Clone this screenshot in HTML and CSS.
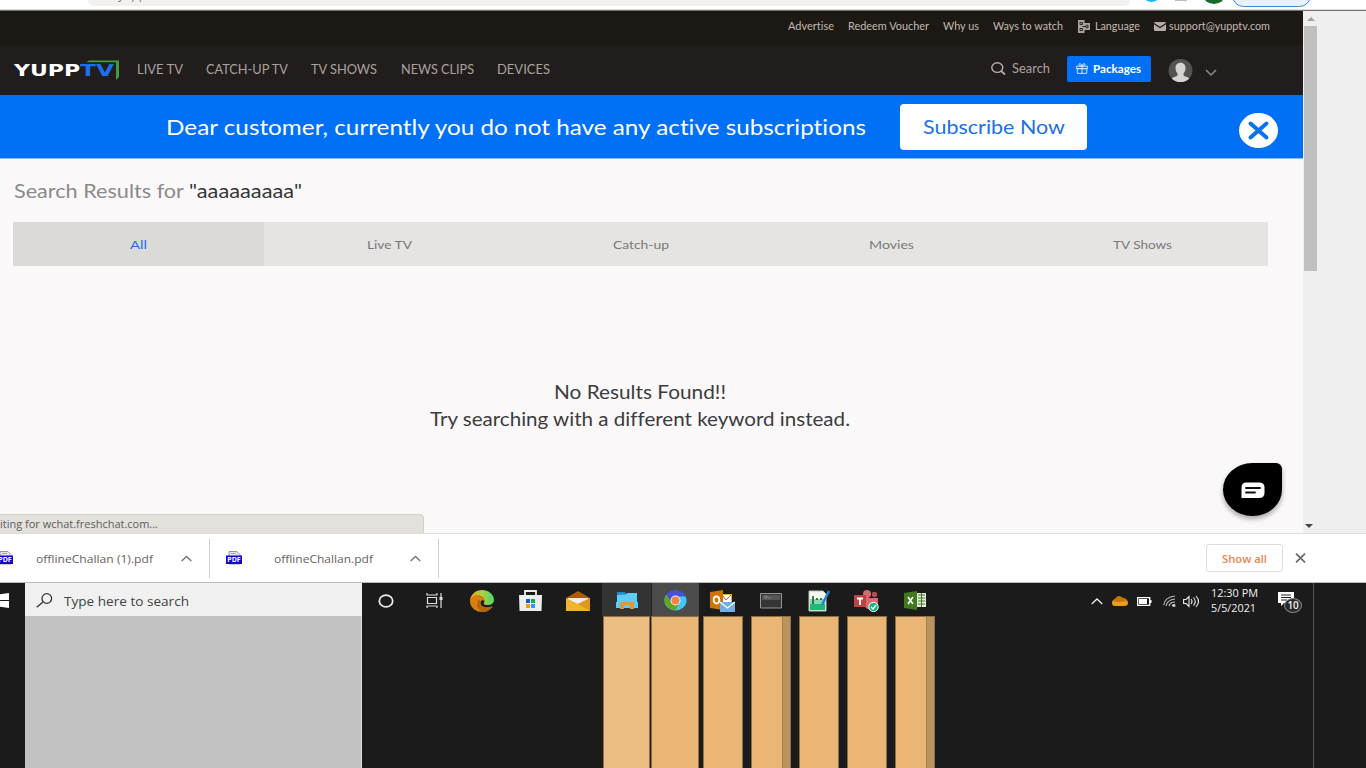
FILE: index.html
```html
<!DOCTYPE html>
<html lang="en">
<head>
<meta charset="utf-8">
<title>YuppTV - Search Results</title>
<link rel="stylesheet" href="styles.css">
</head>
<body>
<div class="chrome">
  <div class="omnibox"><span>yupp</span></div>
  <i class="ext cyan"></i><i class="ext grey"></i><i class="ext green"></i><i class="update"></i>
</div>

<div class="window">
  <div class="page">
    <div class="topbar">
      <span class="fit" data-w="46">Advertise</span>
      <span class="fit" data-w="81">Redeem Voucher</span>
      <span class="fit" data-w="36">Why us</span>
      <span class="fit" data-w="70">Ways to watch</span>
      <span class="pair language">
        <svg width="13" height="13" viewBox="0 0 13 13"><path d="M0 0h6.500v3H12v7H6.500v3H0z" fill="#a9a19d"/><path d="M2 2.500h2.500v2H2zM2 8.500h2.500v2H2zM8 5.300h2v2.400H8zM4.500 6.500H8" fill="none" stroke="#312b28"/></svg>
        <span class="fit" data-w="45">Language</span>
      </span>
      <span class="pair mail">
        <svg width="12" height="9" viewBox="0 0 12 9"><rect width="12" height="9" rx="1" fill="#b5aca8"/><path d="M0 1.500l6 4 6-4" fill="none" stroke="#1c1814" stroke-width="1.200"/></svg>
        <span class="fit" data-w="101">support@yupptv.com</span>
      </span>
    </div>

    <div class="nav">
      <div class="logo">
        <span class="fit" data-w="66">YUPP</span><span class="fit tv" data-w="34">TV</span>
        <svg class="corner" width="34" height="21" viewBox="0 0 34 21"><path d="M0 2.200L3 .5H33V17L30 20V2.200z" fill="#3f9d3c"/></svg>
      </div>
      <div class="menu">
        <span class="fit" data-w="46">LIVE TV</span>
        <span class="fit" data-w="82">CATCH-UP TV</span>
        <span class="fit" data-w="66">TV SHOWS</span>
        <span class="fit" data-w="73">NEWS CLIPS</span>
        <span class="fit" data-w="53">DEVICES</span>
      </div>
      <div class="find">
        <svg width="15" height="13" viewBox="0 0 15 13"><ellipse cx="6.300" cy="5.600" rx="5.500" ry="4.800" fill="none" stroke="#b5afad" stroke-width="1.400"/><path d="M10 9l4 3.500" stroke="#b5afad" stroke-width="1.700"/></svg>
        <span class="fit" data-w="38">Search</span>
      </div>
      <div class="packages">
        <svg width="12" height="11" viewBox="0 0 12 12" preserveAspectRatio="none" fill="none" stroke="#d7e8ff"><path d="M.6 3.500h10.800v2.700H.6zM1.300 6.200h9.400v5.100H1.300zM6 3.500v7.800M6 3.500C4 3.500 2.500 2.500 3 1.200S5.600 1 6 3.500C6.400 1 8.500-.1 9 1.200S8 3.500 6 3.500"/></svg>
        <span class="fit" data-w="48">Packages</span>
      </div>
      <svg class="avatar" width="25" height="23" viewBox="0 0 25 23"><defs><clipPath id="face"><ellipse cx="12.500" cy="11.500" rx="12" ry="11.500"/></clipPath></defs><g clip-path="url(#face)"><path fill="#555250" d="M0 0h25v23H0z"/><path d="M7.500 8.500C7.500 2 17.500 2 17.500 8.500c0 3-.7 4.500-2 6v2c2 1.500 5 1.500 6 3.500v4H3.500v-4c1-2 4-2 6-3.500v-2c-1.300-1.500-2-3-2-6z" fill="#d5d4d3"/></g></svg>
      <svg class="more" width="12" height="8" viewBox="0 0 12 8"><path d="M1 1l5 5 5-5" fill="none" stroke="#8f8b89" stroke-width="1.500"/></svg>
    </div>

    <div class="banner">
      <span class="fit message" data-w="700">Dear customer, currently you do not have any active subscriptions</span>
      <div class="subscribe"><span class="fit" data-w="142">Subscribe Now</span></div>
      <svg class="dismiss" width="39" height="35" viewBox="0 0 39 35"><ellipse cx="19.500" cy="17.500" rx="19.500" ry="17.500" fill="#fff"/><path d="M11.500 10.500l16 14M27.500 10.500l-16 14" stroke="#0b72ef" stroke-width="4" stroke-linecap="round"/></svg>
    </div>

    <div class="heading"><span class="fit" data-w="170">Search Results for</span><span class="fit term" data-w="113">"aaaaaaaaa"</span></div>

    <div class="tabs">
      <div class="active"><span class="fit" data-w="17">All</span></div>
      <div><span class="fit" data-w="45">Live TV</span></div>
      <div><span class="fit" data-w="56">Catch-up</span></div>
      <div><span class="fit" data-w="45">Movies</span></div>
      <div><span class="fit" data-w="59">TV Shows</span></div>
    </div>

    <div class="empty">
      <span class="fit" data-w="172">No Results Found!!</span>
      <span class="fit" data-w="420">Try searching with a different keyword instead.</span>
    </div>

    <div class="chat"><svg width="24" height="17" viewBox="0 0 24 17"><path d="M5 .5h13q5.500 0 5.500 5v5.500q0 5-5.500 5H.5V6q0-5.500 4.500-5.500z" fill="#fff"/><path d="M5 6h14M5 10.500h9" stroke="#111" stroke-width="1.800" stroke-linecap="round"/></svg></div>
    <div class="status"><span class="fit" data-w="158">iting for wchat.freshchat.com...</span></div>
  </div>
  <div class="scroll">
    <svg width="8" height="4" viewBox="0 0 8 4"><path d="M0 4l4-4 4 4z" fill="#a0a0a0"/></svg>
    <i class="thumb"></i>
    <svg class="down" width="8" height="4" viewBox="0 0 8 4"><path d="M0 0h8L4 4z" fill="#444"/></svg>
  </div>
</div>

<div class="downloads">
  <div class="file first">
    <svg width="17" height="14" viewBox="0 0 17 14"><path d="M3 .5h8l3 3V13H3z" fill="#e3e3e3" stroke="#999"/><path d="M5 2.500h5" stroke="#aaa"/><path fill="#1407cd" d="M0 4.500h16v8.500H0z"/><text class="pdf" x="1.300" y="11.300" textLength="13.400" lengthAdjust="spacingAndGlyphs">PDF</text></svg>
    <span class="fit" data-w="117">offlineChallan (1).pdf</span>
    <svg class="up" width="11" height="7" viewBox="0 0 11 7"><path d="M.7 6l4.800-4.500L10.300 6" fill="none" stroke="#777" stroke-width="1.500"/></svg>
  </div>
  <div class="file second">
    <svg width="17" height="14" viewBox="0 0 17 14"><path d="M3 .5h8l3 3V13H3z" fill="#e3e3e3" stroke="#999"/><path d="M5 2.500h5" stroke="#aaa"/><path fill="#1407cd" d="M0 4.500h16v8.500H0z"/><text class="pdf" x="1.300" y="11.300" textLength="13.400" lengthAdjust="spacingAndGlyphs">PDF</text></svg>
    <span class="fit" data-w="99">offlineChallan.pdf</span>
    <svg class="up" width="11" height="7" viewBox="0 0 11 7"><path d="M.7 6l4.800-4.500L10.300 6" fill="none" stroke="#777" stroke-width="1.500"/></svg>
  </div>
  <div class="showall"><span class="fit" data-w="45">Show all</span></div>
  <svg width="11" height="10" viewBox="0 0 11 10"><path d="M1 .7l9 8.600M10 .7L1 9.300" stroke="#686868" stroke-width="1.700"/></svg>
</div>

<div class="taskbar">
  <div class="start"><svg width="9" height="15" viewBox="0 0 9 15"><path d="M0 1.200L9 0v7H0zM0 8h9v7L0 13.800z" fill="#fff"/></svg></div>
  <div class="search">
    <svg width="17" height="15" viewBox="0 0 17 15"><circle cx="10.800" cy="5.500" r="4.800" fill="none" stroke="#333" stroke-width="1.300"/><path d="M7 9L.7 14.300" stroke="#333" stroke-width="1.400"/></svg>
    <span class="fit" data-w="125">Type here to search</span>
  </div>
  <div class="apps">
    <div><svg width="16" height="14" viewBox="0 0 16 14"><ellipse cx="8" cy="7" rx="6.700" ry="5.900" fill="none" stroke="#e8e8e8" stroke-width="1.800"/></svg></div>
    <div><svg width="17" height="15" viewBox="0 0 17 15" fill="none" stroke="#ddd" stroke-width="1.200"><path d="M1 0v2h10V0M1 15v-2h10v2M1.500 4.500h9v6h-9zM15 0v15"/><path d="M13.500 5.500h3" stroke-width="3"/></svg></div>
    <div><svg width="24" height="22" viewBox="0 0 24 22"><defs><linearGradient id="edge"><stop offset="0" stop-color="#e9a528"/><stop offset=".5" stop-color="#b3cc43"/><stop offset="1" stop-color="#48db63"/></linearGradient></defs><path d="M0 10C1 4 6 0 12 0s12 4 12 10c0 4-4 5.500-8 5-3-.3-2.500-1.500-1.500-3C15 7 9 4 4 7 2 8 1 9 0 10z" fill="url(#edge)"/><path d="M0 11c0-5 7-8 12-4 2 1.500 3 3 2.500 5-1-3-4-2-4 1 0 4 7 6 12 3-2 4-6 6-10 6C5 22 0 17 0 11z" fill="#d98011"/><path d="M8.500 9.500c-3 5-1 11 4 12.500 4 0 8-2 10-6-5 3-12 1-12-3 0-2 0-3-2-3.500z" fill="#b5640a"/></svg></div>
    <div><svg width="23" height="21" viewBox="0 0 23 21"><path d="M6 6V1h11v5" fill="none" stroke="#eee" stroke-width="1.800"/><path fill="#eee" d="M0 5h23l-.5 16H.5z"/><path fill="#1557d4" d="M7 9h4v4H7z"/><path fill="#13ae52" d="M12 9h4v4h-4z"/><path fill="#f19b18" d="M7 14h4v4H7z"/><path fill="#17a5ed" d="M12 14h4v4h-4z"/></svg></div>
    <div><svg width="24" height="20" viewBox="0 0 24 20"><path d="M0 7L12 0l12 7v5H0z" fill="#ad5b08"/><path d="M2 7h20v6H2z" fill="#eee"/><path d="M0 7l12 6 12-6v13H0z" fill="#edb52b"/><path d="M24 7v13L12 13z" fill="#dc9a1c"/></svg></div>
    <div class="hover"><svg width="22" height="17" viewBox="0 0 22 17"><path d="M1 0h8l1 2h11v14H1z" fill="#1b8dc7"/><path d="M1 3l9-.5L11 1h10v9h1v6H0v-6h1z" fill="#5dcdf8"/><path d="M4 10h14v7h-4v-4H8v4H4z" fill="#d59a42"/></svg></div>
    <div class="current"><svg width="23" height="21" viewBox="0 0 23 21"><ellipse cx="11.500" cy="10.500" rx="11" ry="10" fill="#3fc8fb"/><path d="M2 4.500Q6 0 12 .5q7 0 10 6H11l-4 6z" fill="#4552d5"/><path d="M2 4.500q-3 5 0 10 3 5 9 6l4-6q-6 1-8-3z" fill="#66a61e"/><circle cx="11.500" cy="10.500" r="5" fill="#e8eaf4"/><circle cx="11.500" cy="10.500" r="4" fill="#f58243"/></svg></div>
    <div><svg width="25" height="22" viewBox="0 0 25 22"><path fill="#f0a83d" d="M12 4h10v10H12z"/><path d="M13 5h8v7h-8z" fill="#fff"/><path d="M13 6l3 4 5-5" fill="none" stroke="#c66c04"/><path d="M0 2l13-2v20L0 18z" fill="#cf7303"/><ellipse cx="6.500" cy="10" rx="2.800" ry="3.500" fill="none" stroke="#fff" stroke-width="1.800"/><path fill="#70b0e9" d="M10 12h15v10H10z"/><path d="M10 12l7.500 6 7.500-6" fill="none" stroke="#fff" stroke-width="1.300"/></svg></div>
    <div><svg width="22" height="16" viewBox="0 0 22 16"><path fill="#373435" stroke="#969696" d="M.5.500h21v14.500H.5z"/><path fill="#555" d="M2 2h18v5H2z"/><path d="M4 3h3v2H4M8 5h3" fill="none" stroke="#999" stroke-width=".7"/></svg></div>
    <div><svg width="22" height="22" viewBox="0 0 22 22"><path fill="#f5f5ef" stroke="#b2c9b8" d="M1 1h14l3 3v17H1z"/><path fill="#22b878" d="M2 13h15v7H2z"/><path fill="#7fdcae" d="M2 9h15v5H2z"/><path d="M5 6v8M8 9h2M12 9h2" stroke="#244633" stroke-width="1.500"/><path d="M14 15l7-14" stroke="#2683cf" stroke-width="2.500"/></svg></div>
    <div><svg width="25" height="22" viewBox="0 0 25 22"><circle cx="13" cy="4" r="4" fill="#d96970"/><circle cx="20.500" cy="4.500" r="2.700" fill="#b74e53"/><path d="M9 8h15v6q0 6-6 6-7 0-9-7z" fill="#de6970"/><path fill="#ba4346" d="M0 5h12v12H0z"/><path d="M3 8.500h6M6 8.500V15" stroke="#fff" stroke-width="1.800"/><circle cx="19.500" cy="17" r="4.700" fill="#14b782" stroke="#fff"/><path d="M17 17l2 2 3-4" fill="none" stroke="#fff" stroke-width="1.300"/></svg></div>
    <div><svg width="22" height="19" viewBox="0 0 22 19"><path fill="#e3efdb" d="M11 2h11v14H11z"/><path d="M14 4h7M14 7h7M14 10h7M14 13h7M17.500 2v14" stroke="#47732f"/><path d="M0 2l13-2v19L0 17z" fill="#43781f"/><path d="M4 6l5 7M9 6l-5 7" stroke="#fff" stroke-width="1.600"/></svg></div>
  </div>
  <div class="tray">
    <svg class="t1" width="12" height="7" viewBox="0 0 12 7"><path d="M.7 6l5.300-5 5.300 5" fill="none" stroke="#eee" stroke-width="1.300"/></svg>
    <svg class="t2" width="16" height="10" viewBox="0 0 16 10"><path d="M0 7q0-3 3-4 3-5 8-1 5 1 5 5 0 3-4 3H3Q0 10 0 7z" fill="#ed9d1b"/><path d="M3 3q3-5 8-1 4 1 4 3L7 6 1 5q0-1 2-2z" fill="#c87309"/></svg>
    <svg class="t3" width="15" height="9" viewBox="0 0 15 9"><path d="M.7.700h12v7.600h-12z" fill="none" stroke="#fff" stroke-width="1.300"/><path d="M2 2h8v5H2zM13 3h1.500v3H13z" fill="#fff"/></svg>
    <svg class="t4" width="13" height="12" viewBox="0 0 13 12" fill="none" stroke="#bbb" stroke-width="1.200"><path d="M.7 10Q2 2 12 1M3 11Q4 5 12 4M6 11q1-4 6-4M9 11q1-2 3-1.500"/><circle cx="11" cy="10.500" r="1" fill="#fff"/></svg>
    <svg class="t5" width="17" height="13" viewBox="0 0 17 13" fill="none" stroke="#eee" stroke-width="1.100"><path d="M.6 4.500H3L6 1.500v10l-3-3H.6zM8 4q2 2.500 0 5M10.500 2.500q3.500 4 0 8M13 1q5 5.500 0 11"/></svg>
    <div class="clock"><span class="fit" data-w="47">12:30 PM</span><span class="fit" data-w="45">5/5/2021</span></div>
    <div class="notice"><svg width="16" height="15" viewBox="0 0 16 15"><path d="M0 0h16v11H6l-3 3v-3H0z" fill="#fff"/><path d="M3 3h10M3 5.500h10M3 8h6" stroke="#222"/></svg><b>10</b></div>
  </div>
</div>

<div class="lower">
  <div class="block"></div>
  <div class="bars"><i class="light"></i><i class="warm"></i><i></i><i class="split"></i><i></i><i></i><i class="split"></i></div>
  <div class="edge-line"></div>
</div>
<script src="fit.js"></script>
</body>
</html>
```

FILE: styles.css
```css
* { box-sizing: border-box; }
body { margin: 0; width: 1366px; height: 768px; overflow: hidden; background: #1b1b1b; font-family: Lato, sans-serif; font-variant-ligatures: none; }
svg { display: block; flex: none; }
.fit { display: block; flex: none; white-space: nowrap; }
.fit > span { display: inline-block; transform-origin: 0 50%; }

/* browser toolbar */
.chrome { position: relative; height: 11px; background: #fff; border-bottom: 1px solid #77746f; box-shadow: inset 0 -1px #dcdcdc; overflow: hidden; }
.omnibox { width: 1042px; height: 6px; margin-left: 88px; background: #f2f1ef; border-radius: 0 0 12px 12px; overflow: hidden; }
.omnibox span { display: block; margin: -13px 0 0 30px; font: 12px/16px "Open Sans", sans-serif; color: #777; }
.ext { position: absolute; border-radius: 50%; }
.cyan { left: 1144px; top: -10px; width: 15px; height: 12px; background: #13bdf5; }
.grey { left: 1175px; top: 0; width: 12px; height: 1px; border-radius: 0; background: #bbb; }
.green { left: 1203px; top: -15px; width: 22px; height: 19px; background: #176b2c; }
.update { position: absolute; left: 1232px; top: -16px; width: 79px; height: 23px; border: 1px solid #3488e0; border-radius: 12px; background: #e9f2fc; }

.window { display: flex; height: 522px; background: #efefef; }
.page { position: relative; width: 1303px; background: #faf8f9; overflow: hidden; }

.topbar { display: flex; align-items: center; height: 34px; padding: 0 0 4px 787.500px; background: #1c1814; color: #c3bab3; font-size: 10.500px; }
.topbar > * + * { margin-left: 14.300px; }
.pair { display: flex; align-items: center; gap: 4px; }
.pair.mail { gap: 3px; }

.nav { display: flex; align-items: center; height: 50px; padding: 0 0 1px 14px; background: #211d1c; color: #aaa29e; font-size: 12.500px; }
.logo { position: relative; display: flex; width: 105px; margin-top: 2px; color: #fff; font: bold 15px/20px "DejaVu Sans", sans-serif; }
.logo .tv { color: #1c70ef; }
.corner { position: absolute; left: 72px; top: -1px; }
.menu { display: flex; gap: 23.200px; margin-left: 18px; }
.find { display: flex; align-items: center; gap: 6px; margin: -3px 0 0 441px; }
.packages { display: flex; align-items: center; gap: 5px; width: 84px; height: 26px; padding: 0 0 1px 9px; margin: -1px 0 0 17px; border-radius: 2px; background: #0070f7; color: #fff; font-size: 10.500px; font-weight: bold; }
.avatar { margin: 2px 0 0 17px; }
.more { margin: 6px 0 0 12px; }

.banner { display: flex; align-items: center; height: 64px; padding-left: 166px; border-bottom: 1px solid #8bbdf8; background: #0070f7; color: #fff; }
.message { font-size: 21.500px; }
.subscribe { display: flex; align-items: center; width: 187px; height: 46px; margin-left: 34px; padding: 1px 0 0 23px; border-radius: 4px; background: #fff; color: #1c70e8; font-size: 18.500px; }
.dismiss { margin: 7px 0 0 152px; }

.heading { display: flex; gap: 5.500px; height: 63px; padding: 20px 0 0 13.500px; font-size: 18.500px; line-height: 24px; color: #8b8a8a; }
.term { color: #37383a; }
.tabs { display: grid; grid-template-columns: repeat(5, 1fr); width: 1255px; height: 44px; margin-left: 13px; background: #e6e4e2; color: #77797b; font-size: 12px; }
.tabs div { display: flex; align-items: center; justify-content: center; }
.tabs .active { background: #dcdad9; color: #1c70ef; }
.empty { display: flex; flex-direction: column; align-items: center; width: 1280px; margin-top: 113px; font-size: 18.500px; line-height: 27px; color: #3d3c40; }

.chat { position: absolute; left: 1223px; top: 452px; width: 59px; height: 53px; display: flex; align-items: center; justify-content: center; padding-top: 2px; border-radius: 30px 6px 30px 30px / 27px 6px 27px 27px; background: #000; box-shadow: 0 3px 5px #0005; }
.status { position: absolute; left: 0; bottom: 0; width: 424px; height: 19px; border: 1px solid #d3d0cd; border-width: 1px 1px 0 0; border-radius: 0 4px 0 0; background: #e4e1dd; color: #5d5c5b; font: 11px/18px "Open Sans", sans-serif; }

.scroll { display: flex; flex-direction: column; align-items: center; width: 14px; margin-left: .5px; padding-top: 6px; }
.thumb { width: 13px; height: 245px; margin-top: 5px; background: #c0c0c0; }
.down { margin: auto 4px 5px 0; }

/* download shelf */
.downloads { display: flex; align-items: center; height: 50px; border-top: 1px solid #dedcdc; border-bottom: 1px solid #bbb; background: #fff; color: #68625e; font: 11.500px/18px "Open Sans", sans-serif; }
.downloads .fit { padding-top: 1px; }
.file { display: flex; align-items: center; height: 39px; border-right: 1px solid #d2d2d2; }
.file.first { width: 213px; margin-left: -3px; }
.first .fit { margin-left: 21.500px; }
.first .up { margin-left: 28px; }
.file.second { width: 229px; padding-left: 16px; }
.second .fit { margin-left: 31px; }
.second .up { margin-left: 37px; }
.pdf { font: bold 6.500px "Open Sans", sans-serif; fill: #fff; }
.showall { display: flex; align-items: center; justify-content: center; width: 77px; height: 28px; margin: 0 12px 0 766.500px; border: 1px solid #dcdcdc; border-radius: 3px; color: #e98455; font-weight: 600; }

/* taskbar */
.taskbar { display: flex; height: 33px; background: #1b1b1b; }
.start { display: flex; align-items: center; width: 25px; padding-top: 1px; }
.search { display: flex; align-items: center; gap: 11px; width: 337px; padding: 2px 0 0 11px; background: #f0f0f0; color: #424242; font: 13.500px/20px "Open Sans", sans-serif; }
.apps { display: grid; grid-template-columns: repeat(12, 48.100px); }
.apps div { display: flex; align-items: center; justify-content: center; padding-top: 2px; }
.hover { background: #333; }
.current { background: #4b4b4b; border-left: 1px solid #222; }
.tray { display: flex; align-items: center; margin-left: 152px; color: #f1f1f1; font-family: "Open Sans", sans-serif; }
.tray > svg { margin-top: 3px; }
.t2, .t3 { margin-left: 9px; }
.t4 { margin-left: 11px; }
.t5 { margin-left: 7px; }
.clock { margin-left: 11px; font-size: 11px; line-height: 15px; }
.notice { position: relative; margin-left: 20px; }
.notice b { position: absolute; left: 6px; top: 6px; width: 18px; height: 15px; border: 1px solid #888; border-radius: 50%; background: #292929; font-size: 10px; line-height: 13px; text-align: center; font-weight: 600; }

.lower { display: flex; height: 152px; }
.block { width: 337px; margin-left: 25px; border-right: 1px solid #dcdcdc; background: #c2c2c2; }
.bars { display: flex; margin-left: 241px; }
.bars i { width: 40px; margin-right: 8px; background: #eab675; border: 1px solid #8e7048; border-width: 1px 1px 0; }
.bars .light { width: 47px; margin-right: 1px; background: #ecbe84; }
.bars .warm { width: 48px; margin-right: 4px; }
.bars .split { background: linear-gradient(90deg, #eab675 30px, #8e7048 30px, #bb935e 31px); }
.edge-line { width: 1px; margin: -33px 0 0 370px; background: #555; }
```

FILE: fit.js
```js
// Stretch each label horizontally to its column width.
document.querySelectorAll('.fit').forEach(function (label) {
  var inner = document.createElement('span');
  inner.textContent = label.textContent;
  label.textContent = '';
  label.appendChild(inner);
  var natural = inner.getBoundingClientRect().width;
  var width = Number(label.dataset.w);
  label.style.width = width + 'px';
  inner.style.transform = 'scaleX(' + width / natural + ')';
});
```
